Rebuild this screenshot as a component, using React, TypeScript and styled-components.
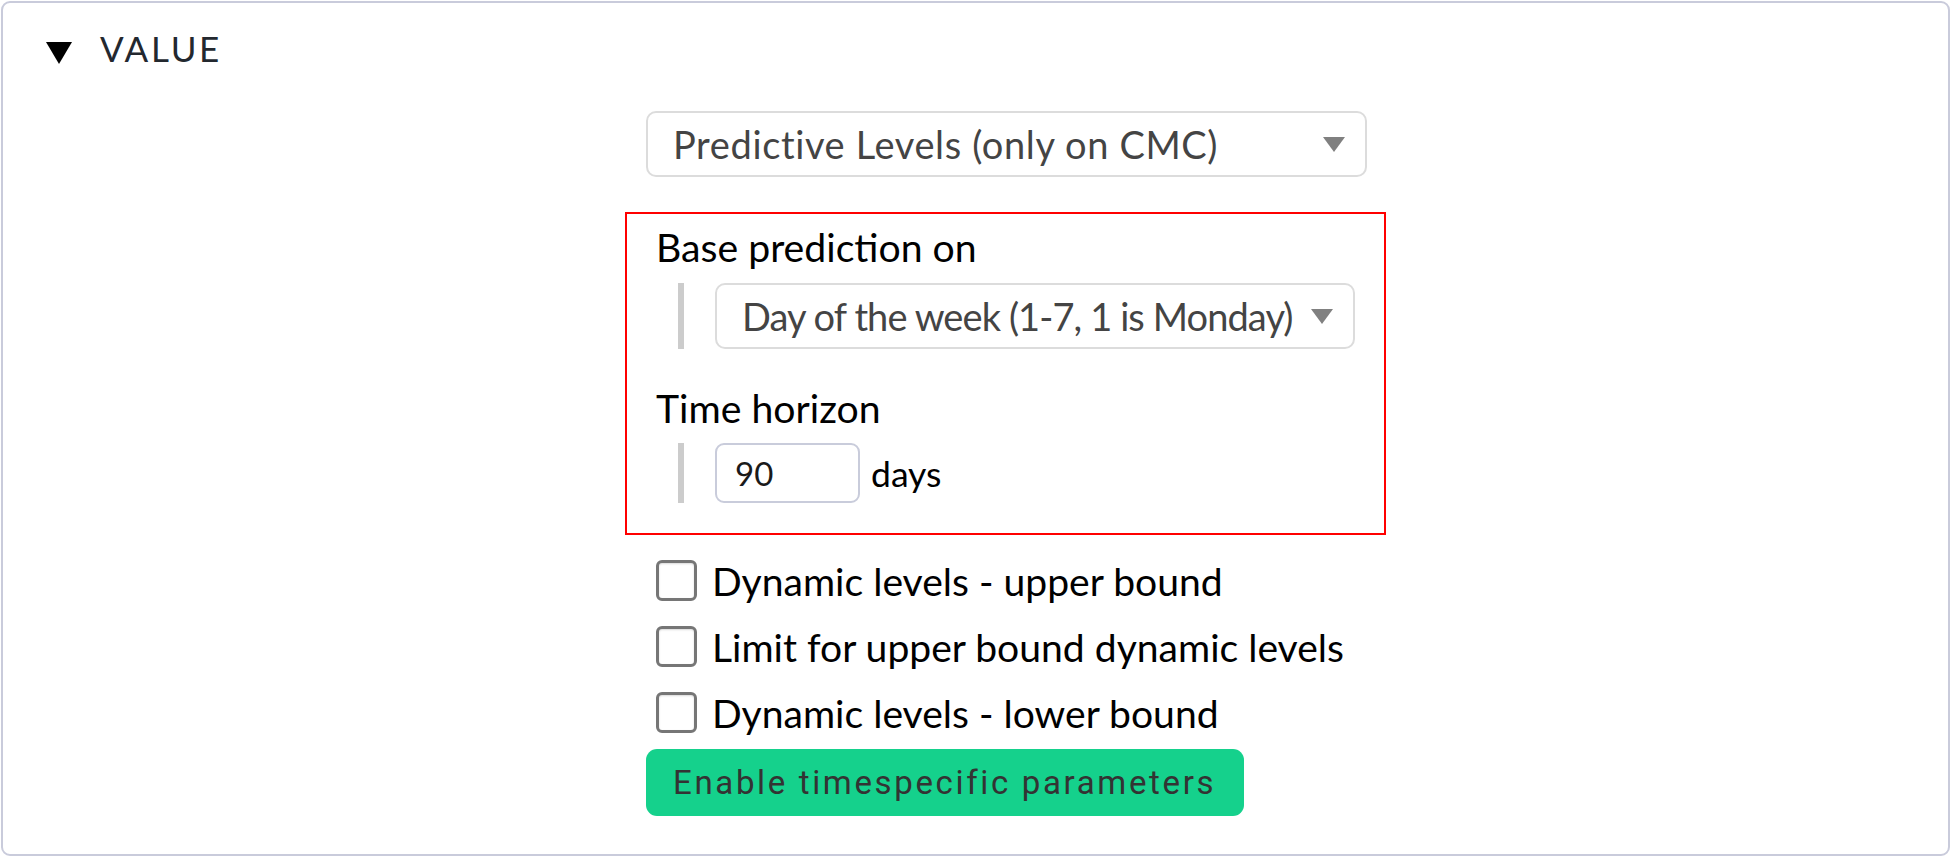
import React from "react";
import styled, { createGlobalStyle } from "styled-components";

const Global = createGlobalStyle`
  html, body { margin: 0; padding: 0; background: #ffffff; }
  body { font-family: Lato, "Noto Sans", sans-serif; }
  * { box-sizing: border-box; }
`;

const Panel = styled.div`
  margin: 1px;
  height: 855px;
  border: 2px solid #c9cbdb;
  border-radius: 9px;
  background: #fff;
  display: flex;
  flex-direction: column;
`;

const Header = styled.div`
  height: 90px;
  display: flex;
  align-items: center;
  padding-left: 43px;
  gap: 28px;
`;

const Caret = styled.span`
  width: 0;
  height: 0;
  border-left: 13px solid transparent;
  border-right: 13px solid transparent;
  border-top: 22px solid #000;
  margin-top: 10px;
`;

const Title = styled.span`
  font-family: Lato, sans-serif;
  font-size: 35px;
  letter-spacing: 2.7px;
  color: #23282f;
  line-height: 40px;
`;

const Body = styled.div`
  display: flex;
  flex-direction: column;
  align-items: flex-start;
  padding-left: 622px;
  padding-top: 18px;
`;

const SelectBox = styled.div<{ $width: number; $ml?: number; $tight?: boolean }>`
  width: ${(p) => p.$width}px;
  height: 66px;
  margin-left: ${(p) => p.$ml ?? 0}px;
  border: 2px solid #dcdcdc;
  border-radius: 10px;
  display: flex;
  align-items: center;
  justify-content: space-between;
  padding: 0 20px 0 25px;
  font-family: Lato, sans-serif;
  font-size: 38px;
  letter-spacing: ${(p) => (p.$tight ? "-0.9px" : "0.63px")};
  color: #444;
  background: #fff;
  white-space: nowrap;
`;

const SelectArrow = styled.span`
  flex: none;
  width: 0;
  height: 0;
  border-left: 11px solid transparent;
  border-right: 11px solid transparent;
  border-top: 15px solid #808080;
`;

const Group = styled.div`
  margin-top: 35px;
  width: 761px;
  border: 2px solid #ff0000;
  padding: 12px 0 30px 29px;
  display: flex;
  flex-direction: column;
  align-items: flex-start;
`;

const Label = styled.div<{ $mt?: number }>`
  font-family: Lato, sans-serif;
  font-size: 39.2px;
  line-height: 42px;
  color: #000;
  margin-top: ${(p) => p.$mt ?? 0}px;
`;

const Indent = styled.div<{ $mt: number }>`
  margin-top: ${(p) => p.$mt}px;
  margin-left: 22px;
  border-left: 6px solid #cccccc;
  padding-left: 31px;
  display: flex;
  align-items: center;
  gap: 11px;
`;

const NumberInput = styled.div`
  width: 145px;
  height: 60px;
  border: 2px solid #c9ccdb;
  border-radius: 9px;
  padding-left: 18px;
  display: flex;
  align-items: center;
  font-family: Lato, sans-serif;
  font-size: 33px;
  color: #1a1a1a;
`;

const Unit = styled.span`
  font-family: Lato, sans-serif;
  font-size: 35.5px;
  color: #000;
`;

const CheckRow = styled.label<{ $mt?: number }>`
  height: 66px;
  margin-top: ${(p) => p.$mt ?? 0}px;
  padding-left: 31px;
  display: flex;
  align-items: center;
  gap: 15px;
  font-family: Lato, sans-serif;
  font-size: 39.1px;
  color: #000;
  white-space: nowrap;
`;

const Box = styled.span`
  flex: none;
  width: 41px;
  height: 41px;
  border: 3px solid #767676;
  border-radius: 6px;
  background: #fff;
  box-shadow: inset 0 1px 2px rgba(0, 0, 0, 0.15);
`;

const GreenButton = styled.button`
  margin-top: 4px;
  margin-left: 21px;
  height: 67px;
  width: 598px;
  border: none;
  border-radius: 11px;
  background: #15d18c;
  color: #333;
  font-family: Roboto, "Liberation Sans", sans-serif;
  font-size: 33px;
  letter-spacing: 2.65px;
  text-align: left;
  padding: 0 0 0 27px;
  white-space: nowrap;
`;

export default function App() {
  return (
    <>
      <Global />
      <Panel>
        <Header>
          <Caret />
          <Title>VALUE</Title>
        </Header>
        <Body>
          <SelectBox $width={721} $ml={21}>
            <span>Predictive Levels (only on CMC)</span>
            <SelectArrow />
          </SelectBox>
          <Group>
            <Label>Base prediction on</Label>
            <Indent $mt={15}>
              <SelectBox $width={640} $tight>
                <span>Day of the week (1-7, 1 is Monday)</span>
                <SelectArrow />
              </SelectBox>
            </Indent>
            <Label $mt={38}>Time horizon</Label>
            <Indent $mt={14}>
              <NumberInput>90</NumberInput>
              <Unit>days</Unit>
            </Indent>
          </Group>
          <CheckRow $mt={12}>
            <Box />
            Dynamic levels - upper bound
          </CheckRow>
          <CheckRow>
            <Box />
            Limit for upper bound dynamic levels
          </CheckRow>
          <CheckRow>
            <Box />
            Dynamic levels - lower bound
          </CheckRow>
          <GreenButton>Enable timespecific parameters</GreenButton>
        </Body>
      </Panel>
    </>
  );
}
